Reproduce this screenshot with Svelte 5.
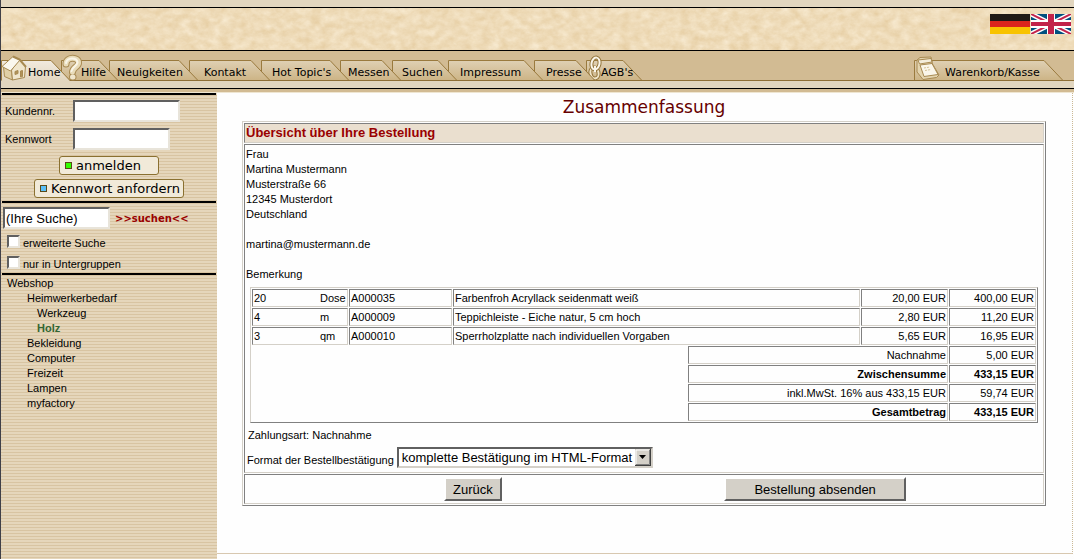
<script>
  let search = '(Ihre Suche)';
  let format = 'html';

  // width runs from the left edge to the foot of the slanted edge
  const tabs = [
    { name: 'Home', width: 69, pad: 27, icon: 'house', active: true },
    { name: 'Hilfe', width: 57, pad: 20, icon: 'help' },
    { name: 'Neuigkeiten', width: 89, pad: 8 },
    { name: 'Kontakt', width: 81, pad: 15 },
    { name: "Hot Topic's", width: 88, pad: 11 },
    { name: 'Messen', width: 61, pad: 8 },
    { name: 'Suchen', width: 65, pad: 10 },
    { name: 'Impressum', width: 95, pad: 12 },
    { name: 'Presse', width: 61, pad: 12 },
    { name: "AGB's", width: 56, pad: 15, icon: 'chain' },
    { name: 'Warenkorb/Kasse', width: 149, pad: 31, icon: 'register', last: true }
  ];

  const tree = [
    { name: 'Heimwerkerbedarf', children: ['Werkzeug', 'Holz'] },
    { name: 'Bekleidung' },
    { name: 'Computer' },
    { name: 'Freizeit' },
    { name: 'Lampen' },
    { name: 'myfactory' }
  ];

  const address = ['Frau', 'Martina Mustermann', 'Musterstraße 66', '12345 Musterdort', 'Deutschland', '', 'martina@mustermann.de', '', 'Bemerkung'];

  const items = [
    { qty: 20, unit: 'Dose', nr: 'A000035', text: 'Farbenfroh Acryllack seidenmatt weiß', price: '20,00 EUR', sum: '400,00 EUR' },
    { qty: 4, unit: 'm', nr: 'A000009', text: 'Teppichleiste - Eiche natur, 5 cm hoch', price: '2,80 EUR', sum: '11,20 EUR' },
    { qty: 3, unit: 'qm', nr: 'A000010', text: 'Sperrholzplatte nach individuellen Vorgaben', price: '5,65 EUR', sum: '16,95 EUR' }
  ];

  const totals = [
    { label: 'Nachnahme', sum: '5,00 EUR' },
    { label: 'Zwischensumme', sum: '433,15 EUR', bold: true },
    { label: 'inkl.MwSt. 16% aus 433,15 EUR', sum: '59,74 EUR' },
    { label: 'Gesamtbetrag', sum: '433,15 EUR', bold: true }
  ];
</script>

<div class="page">
  <header>
    <div class="strip"></div>
    <div class="banner">
      <svg class="paper" width="100%" height="42" aria-hidden="true">
        <filter id="paper" x="0" y="0" width="100%" height="100%" color-interpolation-filters="sRGB">
          <feTurbulence type="fractalNoise" baseFrequency="0.1 0.14" numOctaves="4" seed="8" />
          <feColorMatrix values="0.07 0.04 0 0 0.88  0.11 0.07 0 0 0.77  0.17 0.12 0 0 0.58  0 0 0 0 1" />
        </filter>
        <rect width="100%" height="42" filter="url(#paper)" />
      </svg>
      <div class="flags">
        <a href="#de" aria-label="Deutsch">
          <svg width="40" height="20" viewBox="0 0 40 20">
            <rect width="40" height="7" fill="#1f1a17" />
            <rect y="7" width="40" height="6" fill="#da251d" />
            <rect y="13" width="40" height="7" fill="#f8c300" />
          </svg>
        </a>
        <a href="#en" aria-label="English">
          <svg width="40" height="20" viewBox="0 0 40 20">
            <rect width="40" height="20" fill="#00507f" />
            <path d="M0 0L40 20M40 0L0 20" stroke="#fff" stroke-width="5" />
            <path d="M0 0L16 8M40 0L24 8M0 20L16 12M40 20L24 12" stroke="#c2234a" stroke-width="2" />
            <path d="M20 0V20M0 10H40" stroke="#fff" stroke-width="8" />
            <path d="M20 0V20" stroke="#c2234a" stroke-width="6" />
            <path d="M0 10H40" stroke="#c2234a" stroke-width="4" />
          </svg>
        </a>
      </div>
    </div>
    <nav>
      {#each tabs as tab, i}
        <a href="#{tab.name}" class="tab" class:last={tab.last} style="z-index: {tabs.length - i}">
          <svg width={tab.width + 1} height="25" aria-hidden="true">
            <defs>
              <linearGradient id="tabfill" x1="0" y1="0" x2="0" y2="1">
                <stop offset="0" stop-color="#dfd0b4" />
                <stop offset="1" stop-color="#ccb384" />
              </linearGradient>
              <linearGradient id="activefill" x1="0" y1="0" x2="0" y2="1">
                <stop offset="0" stop-color="#f1eadf" />
                <stop offset="1" stop-color="#e2d6bf" />
              </linearGradient>
            </defs>
            <path d="M0.5 25V4.5H{tab.width - 19}L{tab.width} 25Z" fill="url(#{tab.active ? 'activefill' : 'tabfill'})" />
            <path d="M0.5 24V4.5H{tab.width - 19}L{tab.width} 24.5" fill="none" stroke="#9a7a3e" />
            {#if !tab.active}
              <path d="M0 24.5H{tab.width}" stroke="#8f6f36" />
            {/if}
            {#if tab.icon === 'house'}
              <g stroke="#a88a52" stroke-linejoin="round">
                <path d="M2.5 11L3.5 20.5L11.5 24L10.5 14Z" fill="#e0cfa6" />
                <path d="M10.5 14L18 4L24.5 10.5L23.5 21.5L11.5 24Z" fill="#f0e6cd" />
                <path d="M1 10.5L12 0.5L19 4L9.5 15Z" fill="#faf7ee" />
                <path d="M12 0.5L18.5 3.5L25 11" fill="none" stroke-width="2" />
                <path d="M14 15.5L17 14.5V17.5L14 18.5Z" fill="#b1935a" />
                <path d="M19.5 15L21.5 14.5V20.5L19.5 21Z" fill="#b1935a" />
              </g>
            {:else if tab.icon === 'help'}
              <g fill="none" stroke-linecap="round" stroke-linejoin="round">
                <path d="M5 8C5 0.5 18 0.5 17.500 7C17.500 11 12 11 11.500 16" stroke="#a88a52" stroke-width="7" />
                <path d="M11.500 21H12" stroke="#a88a52" stroke-width="7" />
                <path d="M5 8C5 0.5 18 0.5 17.500 7C17.500 11 12 11 11.500 16" stroke="#e9dcba" stroke-width="5" />
                <path d="M5 7C6 1 16 1 16.500 6.500C16 10 11 11 10.500 15" stroke="#f9f5e8" stroke-width="2" />
                <path d="M11.500 21H12" stroke="#f0e6cd" stroke-width="5" />
              </g>
            {:else if tab.icon === 'chain'}
              <g fill="none">
                <ellipse cx="8.5" cy="17" rx="4" ry="5.5" transform="rotate(-14 8.5 17)" stroke="#94753a" stroke-width="4" />
                <ellipse cx="8.5" cy="17" rx="4" ry="5.5" transform="rotate(-14 8.5 17)" stroke="#efe4c8" stroke-width="2" />
                <ellipse cx="9.5" cy="7.5" rx="4" ry="6" transform="rotate(12 9.5 7.5)" stroke="#94753a" stroke-width="4" />
                <ellipse cx="9.5" cy="7.5" rx="4" ry="6" transform="rotate(12 9.5 7.5)" stroke="#faf6ea" stroke-width="2" />
                <path d="M9 10V16" stroke="#faf6ea" stroke-width="2" />
              </g>
            {:else if tab.icon === 'register'}
              <g stroke="#a88a52" stroke-linejoin="round">
                <path d="M3 4L6 1.5L17 1L18.5 8L25 19L22.500 21.500L9 23.500L3 16Z" fill="#e4d5b0" />
                <path d="M4 4L17 2.500L18 6L5.500 8Z" fill="#f4eddb" />
                <path d="M6 9L18 7.500L24 18.500L10 20.500Z" fill="#faf6ea" />
                <path d="M10 12L16 11M11 14.500L17 13.500" stroke="#d5c296" stroke-dasharray="2 1" />
              </g>
            {/if}
          </svg>
          <span style="padding-left: {tab.pad}px">{tab.name}</span>
        </a>
      {/each}
    </nav>
    <div class="under"></div>
    <div class="gold"></div>
  </header>

  <div class="content">
    <aside>
      <form class="login" on:submit|preventDefault>
        <div class="field">
          <label for="kunde">Kundennr.</label>
          <input id="kunde" class="box" type="text" />
        </div>
        <div class="field">
          <label for="kennwort">Kennwort</label>
          <input id="kennwort" class="box short" type="password" />
        </div>
        <button class="pill"><i></i>anmelden</button>
        <button class="pill wide" type="button"><i class="blue"></i>Kennwort anfordern</button>
      </form>
      <form class="search" on:submit|preventDefault>
        <div class="field">
          <input class="box" type="text" aria-label="Suche" bind:value={search} />
          <a href="#suchen">&gt;&gt;suchen&lt;&lt;</a>
        </div>
        <label class="check"><input type="checkbox" />erweiterte Suche</label>
        <label class="check"><input type="checkbox" />nur in Untergruppen</label>
      </form>
      <div class="tree">
        <a href="#webshop">Webshop</a>
        <ul>
          {#each tree as group}
            <li>
              <a href="#{group.name}">{group.name}</a>
              {#if group.children}
                <ul>
                  {#each group.children as child}
                    <li><a href="#{child}" class:current={child === 'Holz'}>{child}</a></li>
                  {/each}
                </ul>
              {/if}
            </li>
          {/each}
        </ul>
      </div>
    </aside>

    <main>
      <h1>Zusammenfassung</h1>
      <table class="outer">
        <tbody>
          <tr><th>Übersicht über Ihre Bestellung</th></tr>
          <tr>
            <td>
              <div class="address">
                {#each address as line}
                  <p>{line}</p>
                {/each}
              </div>
              <div class="order">
                <table>
                  <colgroup>
                    <col class="qty" /><col class="nr" /><col /><col class="text" /><col class="eur" /><col class="eur" />
                  </colgroup>
                  <tbody>
                    {#each items as item}
                      <tr>
                        <td><span class="amount">{item.qty}</span>{item.unit}</td>
                        <td>{item.nr}</td>
                        <td colspan="2">{item.text}</td>
                        <td class="num">{item.price}</td>
                        <td class="num">{item.sum}</td>
                      </tr>
                    {/each}
                    {#each totals as total, i}
                      <tr class:bold={total.bold}>
                        {#if i === 0}
                          <td class="blank" colspan="3" rowspan="4"></td>
                        {/if}
                        <td class="num" colspan="2">{total.label}</td>
                        <td class="num">{total.sum}</td>
                      </tr>
                    {/each}
                  </tbody>
                </table>
              </div>
              <div class="pay">Zahlungsart: Nachnahme</div>
              <div class="format">
                <label for="format">Format der Bestellbestätigung</label>
                <div class="drop">
                  <select id="format" bind:value={format}>
                    <option value="html">komplette Bestätigung im HTML-Format</option>
                    <option value="text">komplette Bestätigung im Text-Format</option>
                  </select>
                  <svg width="16" height="17" viewBox="0 0 16 17" aria-hidden="true">
                    <rect width="16" height="17" fill="#404040" />
                    <rect width="15" height="16" fill="#d4d0c8" />
                    <path d="M1 15V1H14" fill="none" stroke="#fff" />
                    <path d="M1 15.5H14.5V1" fill="none" stroke="#808080" />
                    <path d="M4 6H11L7.5 10Z" fill="#000" />
                  </svg>
                </div>
              </div>
            </td>
          </tr>
          <tr>
            <td>
              <div class="actions">
                <button>Zurück</button>
                <button class="send">Bestellung absenden</button>
              </div>
            </td>
          </tr>
        </tbody>
      </table>
    </main>
  </div>
</div>

<style>
  :global(body) {
    margin: 0;
    background: #fefefe;
  }

  .page {
    display: flex;
    flex-direction: column;
    min-height: 100vh;
    box-sizing: border-box;
    border-left: 1px solid #404048;
    font-family: "Liberation Sans", Arial, sans-serif;
    font-size: 11px;
    line-height: 15px;
    color: #000;
  }

  a {
    color: inherit;
    text-decoration: none;
  }

  svg {
    display: block;
  }

  .strip {
    height: 7px;
    background: #e2d6bf;
    border-bottom: 1px solid #000;
  }

  .banner {
    display: grid;
    border-bottom: 1px solid #000;
    background: #efdfbe;
  }

  .paper,
  .flags {
    grid-area: 1 / 1;
  }

  .flags {
    display: flex;
    justify-content: flex-end;
    gap: 1px;
    padding: 6px 3px 0 0;
    z-index: 1;
  }

  nav {
    display: flex;
    padding: 5px 11px 0 0;
    background: #d2bb93;
    border-bottom: 1px solid #8f6f36;
  }

  .tab {
    display: grid;
    margin: 0 -10px -1px 0;
    font-family: "DejaVu Sans", Verdana, sans-serif;
    white-space: nowrap;
    position: relative;
  }

  .tab.last {
    margin-left: auto;
    margin-right: -1px;
  }

  .tab svg {
    grid-area: 1 / 1;
    overflow: visible;
  }

  .tab span {
    grid-area: 1 / 1;
    padding-top: 9px;
  }

  .under {
    height: 7px;
    background: #e2d6bf;
    border-bottom: 1px solid #000;
  }

  .gold {
    height: 3px;
    background: #d2bb93;
    border-bottom: 1px solid #efe6d2;
  }

  .content {
    display: flex;
    flex: 1;
  }

  aside {
    flex: none;
    width: 216px;
    box-sizing: border-box;
    padding: 0 1px;
    background: repeating-linear-gradient(#e5d6bb 0 2px, #d8c4a2 2px 3px);
  }

  .login,
  .search,
  .tree {
    border-top: 2px solid #000;
  }

  .login {
    display: flex;
    flex-direction: column;
    align-items: center;
    gap: 4px;
    padding: 5px 0 3px;
  }

  .login .field {
    align-self: stretch;
    padding: 0 0 2px 3px;
  }

  .field {
    display: flex;
    align-items: center;
  }

  .login label {
    width: 68px;
  }

  .box {
    width: 107px;
    height: 22px;
    box-sizing: border-box;
    padding: 0 1px;
    border: 2px solid;
    border-color: #606060 #e8e4da #e8e4da #606060;
    border-radius: 0;
    background: #fff;
    font: 13px "Liberation Sans", Arial, sans-serif;
  }

  .box.short {
    width: 97px;
  }

  .pill {
    display: flex;
    align-items: center;
    gap: 4px;
    width: 100px;
    height: 19px;
    padding: 0 5px;
    border: 1px solid #8a7030;
    border-radius: 3px;
    background: #f1ead9;
    color: #000;
    font: 13px "DejaVu Sans", Verdana, sans-serif;
    white-space: nowrap;
  }

  .pill.wide {
    width: 150px;
  }

  .pill i {
    flex: none;
    width: 5px;
    height: 5px;
    border: 1px solid #5a4a18;
    background: #3f0;
  }

  .pill i.blue {
    background: #5bc0f8;
  }

  .search {
    display: flex;
    flex-direction: column;
    gap: 4px;
    padding: 4px 0 0 1px;
  }

  .search .field {
    gap: 5px;
    padding-bottom: 2px;
  }

  .search a {
    color: #900;
    font: bold 10px "DejaVu Sans", Verdana, sans-serif;
  }

  .check {
    display: flex;
    gap: 3px;
    height: 17px;
    padding-left: 4px;
    line-height: 17px;
  }

  .check input {
    appearance: none;
    width: 13px;
    height: 13px;
    margin: 0;
    border: 2px solid;
    border-color: #606060 #e8e4da #e8e4da #606060;
    background: #fff;
  }

  .check input:checked {
    background: #404040;
  }

  .tree {
    padding: 1px 0 0 5px;
  }

  ul {
    list-style: none;
    margin: 0;
    padding: 0 0 0 20px;
  }

  ul ul {
    padding-left: 10px;
  }

  .current {
    color: #363;
    font-weight: bold;
  }

  main {
    flex: 1;
    min-width: 0;
    margin: 0 1px 5px 0;
    padding: 0 26px 20px 25px;
    border-right: 1px dotted #cbb994;
    border-bottom: 1px solid #d8c8b0;
    background: #fefefe;
  }

  h1 {
    margin: 0;
    padding: 4px 0;
    color: #600;
    font: 17px/20px "DejaVu Sans", Verdana, sans-serif;
    text-align: center;
  }

  table {
    width: 100%;
    border: 1px solid;
    border-color: #d4d0c8 #808080 #808080 #d4d0c8;
    border-spacing: 1px;
  }

  td,
  th {
    padding: 1px;
    border: 1px solid;
    border-color: #808080 #d4d0c8 #d4d0c8 #808080;
    text-align: left;
    white-space: nowrap;
  }

  th {
    height: 16px;
    background: #eadfcf;
    color: #900;
    font-size: 13px;
    line-height: 16px;
  }

  .address {
    padding-top: 1px;
  }

  p {
    height: 15px;
    margin: 0;
  }

  .order {
    padding: 5px 4px 0;
  }

  .order table {
    table-layout: fixed;
    line-height: 14px;
  }

  .qty {
    width: 96px;
  }

  .nr {
    width: 103px;
  }

  .text {
    width: 172px;
  }

  .eur {
    width: 87px;
  }

  .amount {
    display: inline-block;
    width: 66px;
  }

  td.num {
    text-align: right;
  }

  td.blank {
    border: none;
  }

  .bold {
    font-weight: bold;
  }

  .pay {
    padding: 5px 2px 4px;
  }

  .format {
    display: flex;
    align-items: flex-end;
    gap: 3px;
    padding: 0 0 3px 1px;
  }

  .drop {
    display: grid;
    width: 256px;
  }

  .drop select,
  .drop svg {
    grid-area: 1 / 1;
  }

  .drop select {
    appearance: none;
    height: 21px;
    padding: 0 18px 0 3px;
    border: 2px solid;
    border-color: #606060 #d4d0c8 #d4d0c8 #606060;
    border-radius: 0;
    background: #fff;
    color: #000;
    font: 13px "Liberation Sans", Arial, sans-serif;
  }

  .drop svg {
    justify-self: end;
    margin: 2px 2px 0 0;
    pointer-events: none;
  }

  .actions {
    display: grid;
    grid-template-columns: 57% 29%;
    justify-items: center;
    padding: 1px 0;
  }

  .actions button {
    height: 24px;
    padding: 0 7px;
    border: 2px solid;
    border-color: #fff #606060 #606060 #fff;
    background: #d4d0c8;
    color: #000;
    font: 13px "Liberation Sans", Arial, sans-serif;
  }

  .actions .send {
    width: 182px;
  }
</style>
